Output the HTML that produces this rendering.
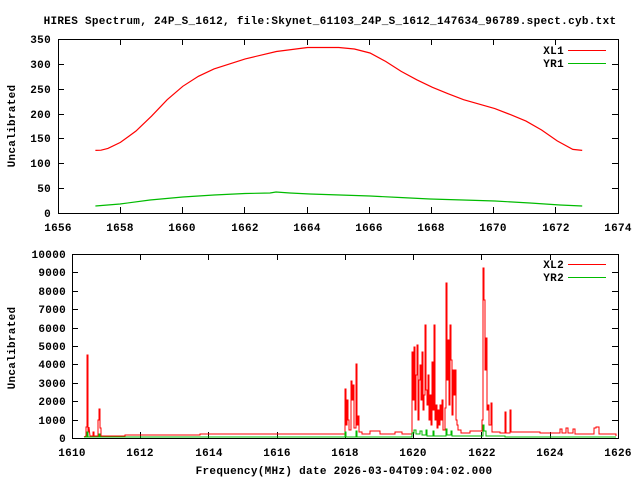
<!DOCTYPE html>
<html><head><style>
html,body{margin:0;padding:0;background:#fff;}
svg{display:block;}
text{font-family:"Liberation Mono",monospace;font-weight:bold;font-size:11px;letter-spacing:0.3px;fill:#000;}
</style></head><body>
<svg width="640" height="480" viewBox="0 0 640 480" xmlns="http://www.w3.org/2000/svg">
<text x="330" y="24" text-anchor="middle">HIRES Spectrum, 24P_S_1612, file:Skynet_61103_24P_S_1612_147634_96789.spect.cyb.txt</text>

<!-- TOP PLOT -->
<rect x="58.5" y="39.5" width="560" height="174" fill="none" stroke="#000" stroke-width="1"/>
<g stroke="#000" stroke-width="1">
<path d="M58 188.5h6M618 188.5h-6M58 163.5h6M618 163.5h-6M58 138.5h6M618 138.5h-6M58 114.5h6M618 114.5h-6M58 89.5h6M618 89.5h-6M58 64.5h6M618 64.5h-6"/>
<path d="M120.5 213v-6M120.5 39v6M182.5 213v-6M182.5 39v6M244.5 213v-6M244.5 39v6M307.5 213v-6M307.5 39v6M369.5 213v-6M369.5 39v6M431.5 213v-6M431.5 39v6M493.5 213v-6M493.5 39v6M555.5 213v-6M555.5 39v6"/>
</g>
<g text-anchor="end">
<text x="51" y="217">0</text><text x="51" y="192">50</text><text x="51" y="167">100</text><text x="51" y="142">150</text><text x="51" y="118">200</text><text x="51" y="93">250</text><text x="51" y="68">300</text><text x="51" y="43">350</text>
</g>
<g text-anchor="middle">
<text x="58" y="231">1656</text><text x="120" y="231">1658</text><text x="182" y="231">1660</text><text x="245" y="231">1662</text><text x="307" y="231">1664</text><text x="369" y="231">1666</text><text x="431" y="231">1668</text><text x="493" y="231">1670</text><text x="556" y="231">1672</text><text x="618" y="231">1674</text>
</g>
<text transform="translate(15,126) rotate(-90)" text-anchor="middle">Uncalibrated</text>
<text x="564" y="54" text-anchor="end">XL1</text>
<text x="564" y="67" text-anchor="end">YR1</text>
<path d="M568 50.5h38" stroke="#f00"/>
<path d="M568 63.5h38" stroke="#0b0"/>
<polyline fill="none" stroke="#f00" stroke-width="1.2" points="95.4,150.4 101,150.2 107.9,148.4 120.4,142.4 136,131 151.6,116.1 167.2,99.7 182.8,86.3 198.4,76.3 214,68.9 245.2,58.9 276.4,51.5 307.6,47.5 338.8,47.5 354.4,49 370,53 385.6,61.4 401.2,71.4 416.8,79.8 432.4,87.3 448,93.7 463.6,99.7 494.8,108.6 510.4,114.6 526,121.1 541.6,130 557.2,140.9 572.8,149.4 582.2,150.4"/>
<polyline fill="none" stroke="#0b0" stroke-width="1.2" points="95.4,206 120,204 150,200 182.8,197 214,195 245,193.5 270,193 276,192 290,193 310,194 340,195 370,196 400,197.5 430,199 463,200 495,201 530,203 560,205 582.2,206"/>

<!-- BOTTOM PLOT -->
<rect x="72.5" y="254.5" width="546" height="184" fill="none" stroke="#000" stroke-width="1"/>
<g stroke="#000" stroke-width="1">
<path d="M72 420.5h6M618 420.5h-6M72 401.5h6M618 401.5h-6M72 383.5h6M618 383.5h-6M72 364.5h6M618 364.5h-6M72 346.5h6M618 346.5h-6M72 328.5h6M618 328.5h-6M72 309.5h6M618 309.5h-6M72 291.5h6M618 291.5h-6M72 272.5h6M618 272.5h-6"/>
<path d="M140.5 438v-6M140.5 254v6M208.5 438v-6M208.5 254v6M277.5 438v-6M277.5 254v6M345.5 438v-6M345.5 254v6M413.5 438v-6M413.5 254v6M481.5 438v-6M481.5 254v6M550.5 438v-6M550.5 254v6"/>
</g>
<g text-anchor="end">
<text x="66" y="442">0</text><text x="66" y="424">1000</text><text x="66" y="405">2000</text><text x="66" y="387">3000</text><text x="66" y="368">4000</text><text x="66" y="350">5000</text><text x="66" y="332">6000</text><text x="66" y="313">7000</text><text x="66" y="295">8000</text><text x="66" y="276">9000</text><text x="66" y="258">10000</text>
</g>
<g text-anchor="middle">
<text x="72" y="456">1610</text><text x="140" y="456">1612</text><text x="209" y="456">1614</text><text x="277" y="456">1616</text><text x="345" y="456">1618</text><text x="413" y="456">1620</text><text x="482" y="456">1622</text><text x="550" y="456">1624</text><text x="618" y="456">1626</text>
</g>
<text transform="translate(15,348) rotate(-90)" text-anchor="middle">Uncalibrated</text>
<text x="344" y="474" text-anchor="middle">Frequency(MHz) date 2026-03-04T09:04:02.000</text>
<text x="564" y="268" text-anchor="end">XL2</text>
<text x="564" y="281" text-anchor="end">YR2</text>
<path d="M568 264.5h38" stroke="#f00"/>
<path d="M568 277.5h38" stroke="#0b0"/>
<polyline fill="none" stroke="#f00" stroke-width="1" points="84,437 86,436 86,427 87,427 87,355 88,355 88,432 89,432 89,427 90,436 93,436 93,432 94,432 94,436 98,436 98,420 99,420 99,409 100,409 100,428 101,428 101,436 125,436 125,435 200,435 200,434 345,434 345,389 346,389 346,425 347,425 347,400 348,400 348,420 349,420 349,430 351,430 351,381 352,381 352,400 353,400 353,385 354,385 354,428 356,428 356,364 357,364 357,425 358,425 358,416 359,416 359,432 362,432 362,434 370,434 370,431 380,431 380,434 395,434 395,432 402,432 402,434 412,434 412,352 413,352 413,400 414,400 414,347 415,347 415,410 416,410 416,375 417,375 417,345 418,345 418,420 419,420 419,380 420,380 420,365 421,365 421,400 422,400 422,352 423,352 423,410 424,410 424,395 425,395 425,325 426,325 426,390 427,390 427,405 428,405 428,375 429,375 429,420 430,420 430,395 431,395 431,425 432,425 432,362 433,362 433,410 434,410 434,325 435,325 435,420 436,420 436,405 437,405 437,428 438,428 438,410 439,410 439,425 440,425 440,405 441,405 441,420 442,420 442,400 443,400 443,430 445,430 445,408 446,408 446,283 447,283 447,380 448,380 448,340 449,340 449,405 450,405 450,325 451,325 451,360 452,360 452,415 453,415 453,370 454,370 454,395 455,395 455,370 456,370 456,420 457,420 457,425 458,425 458,430 461,430 461,433 470,433 470,431 482,431 482,420 483,420 483,268 484,268 484,300 485,300 485,370 486,370 486,338 487,338 487,410 488,410 488,405 489,405 489,425 491,425 491,403 492,403 492,432 500,432 500,433 505,433 505,412 506,412 506,433 510,433 510,410 511,410 511,432 540,432 540,433 560,433 560,429 562,429 562,433 566,433 566,428 568,428 568,433 573,433 573,429 575,429 575,434 594,434 594,428 596,428 596,427 599,427 599,434 616,434 616,436"/>
<polyline fill="none" stroke="#0b0" stroke-width="1" points="84,437 87,437 87,432 88,432 88,437 99,437 99,434 100,434 100,437 345,437 345,432 346,432 346,437 356,437 356,431 357,431 357,437 412,437 412,433 414,433 414,430 416,430 416,434 420,434 420,431 422,431 422,435 426,435 426,430 427,430 427,436 433,436 433,431 434,431 434,436 446,436 446,429 447,429 447,435 451,435 451,431 452,431 452,436 483,436 483,425 484,425 484,431 486,431 486,436 505,436 505,437 616,437"/>
</svg>
</body></html>
